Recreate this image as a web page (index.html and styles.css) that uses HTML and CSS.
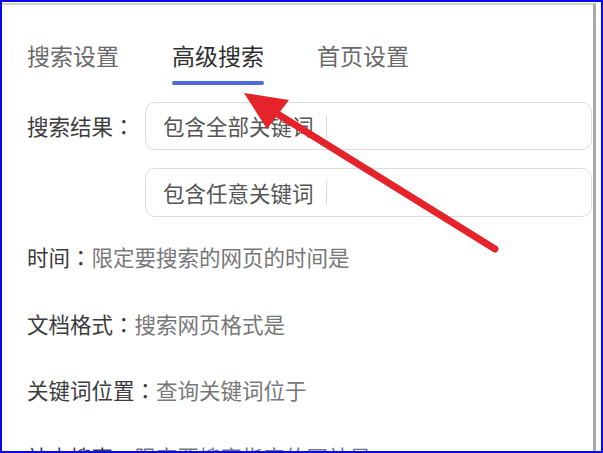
FILE: index.html
```html
<!DOCTYPE html>
<html lang="zh-CN">
<head>
<meta charset="utf-8">
<title>高级搜索</title>
<link rel="stylesheet" href="styles.css">
</head>
<body>
<div class="frame">
  <div class="window">
    <nav class="tabs">
      <div class="tab">搜索设置</div>
      <div class="tab active">高级搜索<span class="tab-bar"></span></div>
      <div class="tab">首页设置</div>
    </nav>

    <div class="form">
      <div class="label">搜索结果<span class="colon" lang="zh-TW">：</span></div>
      <div class="fields">
        <div class="field"><span class="field-text">包含全部关键词</span><span class="caret"></span></div>
        <div class="field"><span class="field-text">包含任意关键词</span><span class="caret"></span></div>
      </div>
    </div>

    <ul class="options">
      <li><span class="opt-name">时间<span class="colon" lang="zh-TW">：</span></span><span class="opt-desc">限定要搜索的网页的时间是</span></li>
      <li><span class="opt-name">文档格式<span class="colon" lang="zh-TW">：</span></span><span class="opt-desc">搜索网页格式是</span></li>
      <li><span class="opt-name">关键词位置<span class="colon" lang="zh-TW">：</span></span><span class="opt-desc">查询关键词位于</span></li>
      <li><span class="opt-name">站内搜索<span class="colon" lang="zh-TW">：</span></span><span class="opt-desc">限定要搜索指定的网站是</span></li>
    </ul>
  </div>

  <svg class="pointer" width="603" height="453" viewBox="0 0 603 453" aria-hidden="true">
    <line x1="276" y1="113" x2="495" y2="249" stroke="#e4232b" stroke-width="7" stroke-linecap="round"/>
    <polygon points="244,93 289,100 267,129" fill="#e4232b"/>
  </svg>
</div>
</body>
</html>
```

FILE: styles.css
```css
* {
  box-sizing: border-box;
}

html, body {
  margin: 0;
  padding: 0;
  background: #ffffff;
}

body {
  font-family: "Noto Sans CJK SC", "Noto Sans", sans-serif;
}

.frame {
  position: relative;
  width: 603px;
  height: 453px;
  border: 2px solid #0608f4;
  padding-top: 1px;
  overflow: hidden;
  background: #ffffff;
}

.window {
  height: 100%;
  margin-right: 5px;
  border-top: 2px solid #cfd0d4;
  border-right: 3px solid #a9aaad;
  overflow: hidden;
}

/* centred full-width colon */
.colon {
  font-family: "Noto Sans CJK TC", "Noto Sans CJK SC", sans-serif;
}

/* tab strip */
.tabs {
  display: flex;
  gap: 53px;
  padding: 35px 0 0 25px;
}

.tab {
  display: flex;
  flex-direction: column;
  font-size: 23px;
  line-height: 30px;
  color: #6a6a6a;
  white-space: nowrap;
}

.tab.active {
  color: #2e2e2e;
}

.tab-bar {
  display: block;
  height: 4px;
  margin-top: 11px;
  border-radius: 2px;
  background: #4e6bdc;
}

/* keyword fields */
.form {
  display: grid;
  grid-template-columns: 118px 1fr;
  margin-top: 17px;
  padding-left: 25px;
  padding-right: 1px;
}

.label {
  font-size: 21.5px;
  line-height: 48px;
  color: #3c3c3c;
  white-space: nowrap;
}

.fields {
  display: flex;
  flex-direction: column;
  gap: 18px;
}

.field {
  display: flex;
  align-items: center;
  height: 48px;
  padding-left: 17px;
  border: 1px solid #dcdcdc;
  border-radius: 10px;
}

.field + .field {
  height: 49px;
}

.field-text {
  font-size: 21.5px;
  line-height: 30px;
  color: #555555;
  white-space: nowrap;
}

.caret {
  width: 1px;
  height: 23px;
  margin-left: 12px;
  background: #d6d6d6;
}

/* option rows */
.options {
  list-style: none;
  margin: 25px 0 0;
  padding: 0 0 0 25px;
  display: flex;
  flex-direction: column;
  gap: 36.5px;
}

.options li {
  font-size: 21.5px;
  line-height: 30px;
  white-space: nowrap;
}

.opt-name {
  color: #3c3c3c;
}

.opt-desc {
  color: #777777;
}

/* red annotation arrow */
.pointer {
  position: absolute;
  top: -2px;
  left: -2px;
  pointer-events: none;
}
```
